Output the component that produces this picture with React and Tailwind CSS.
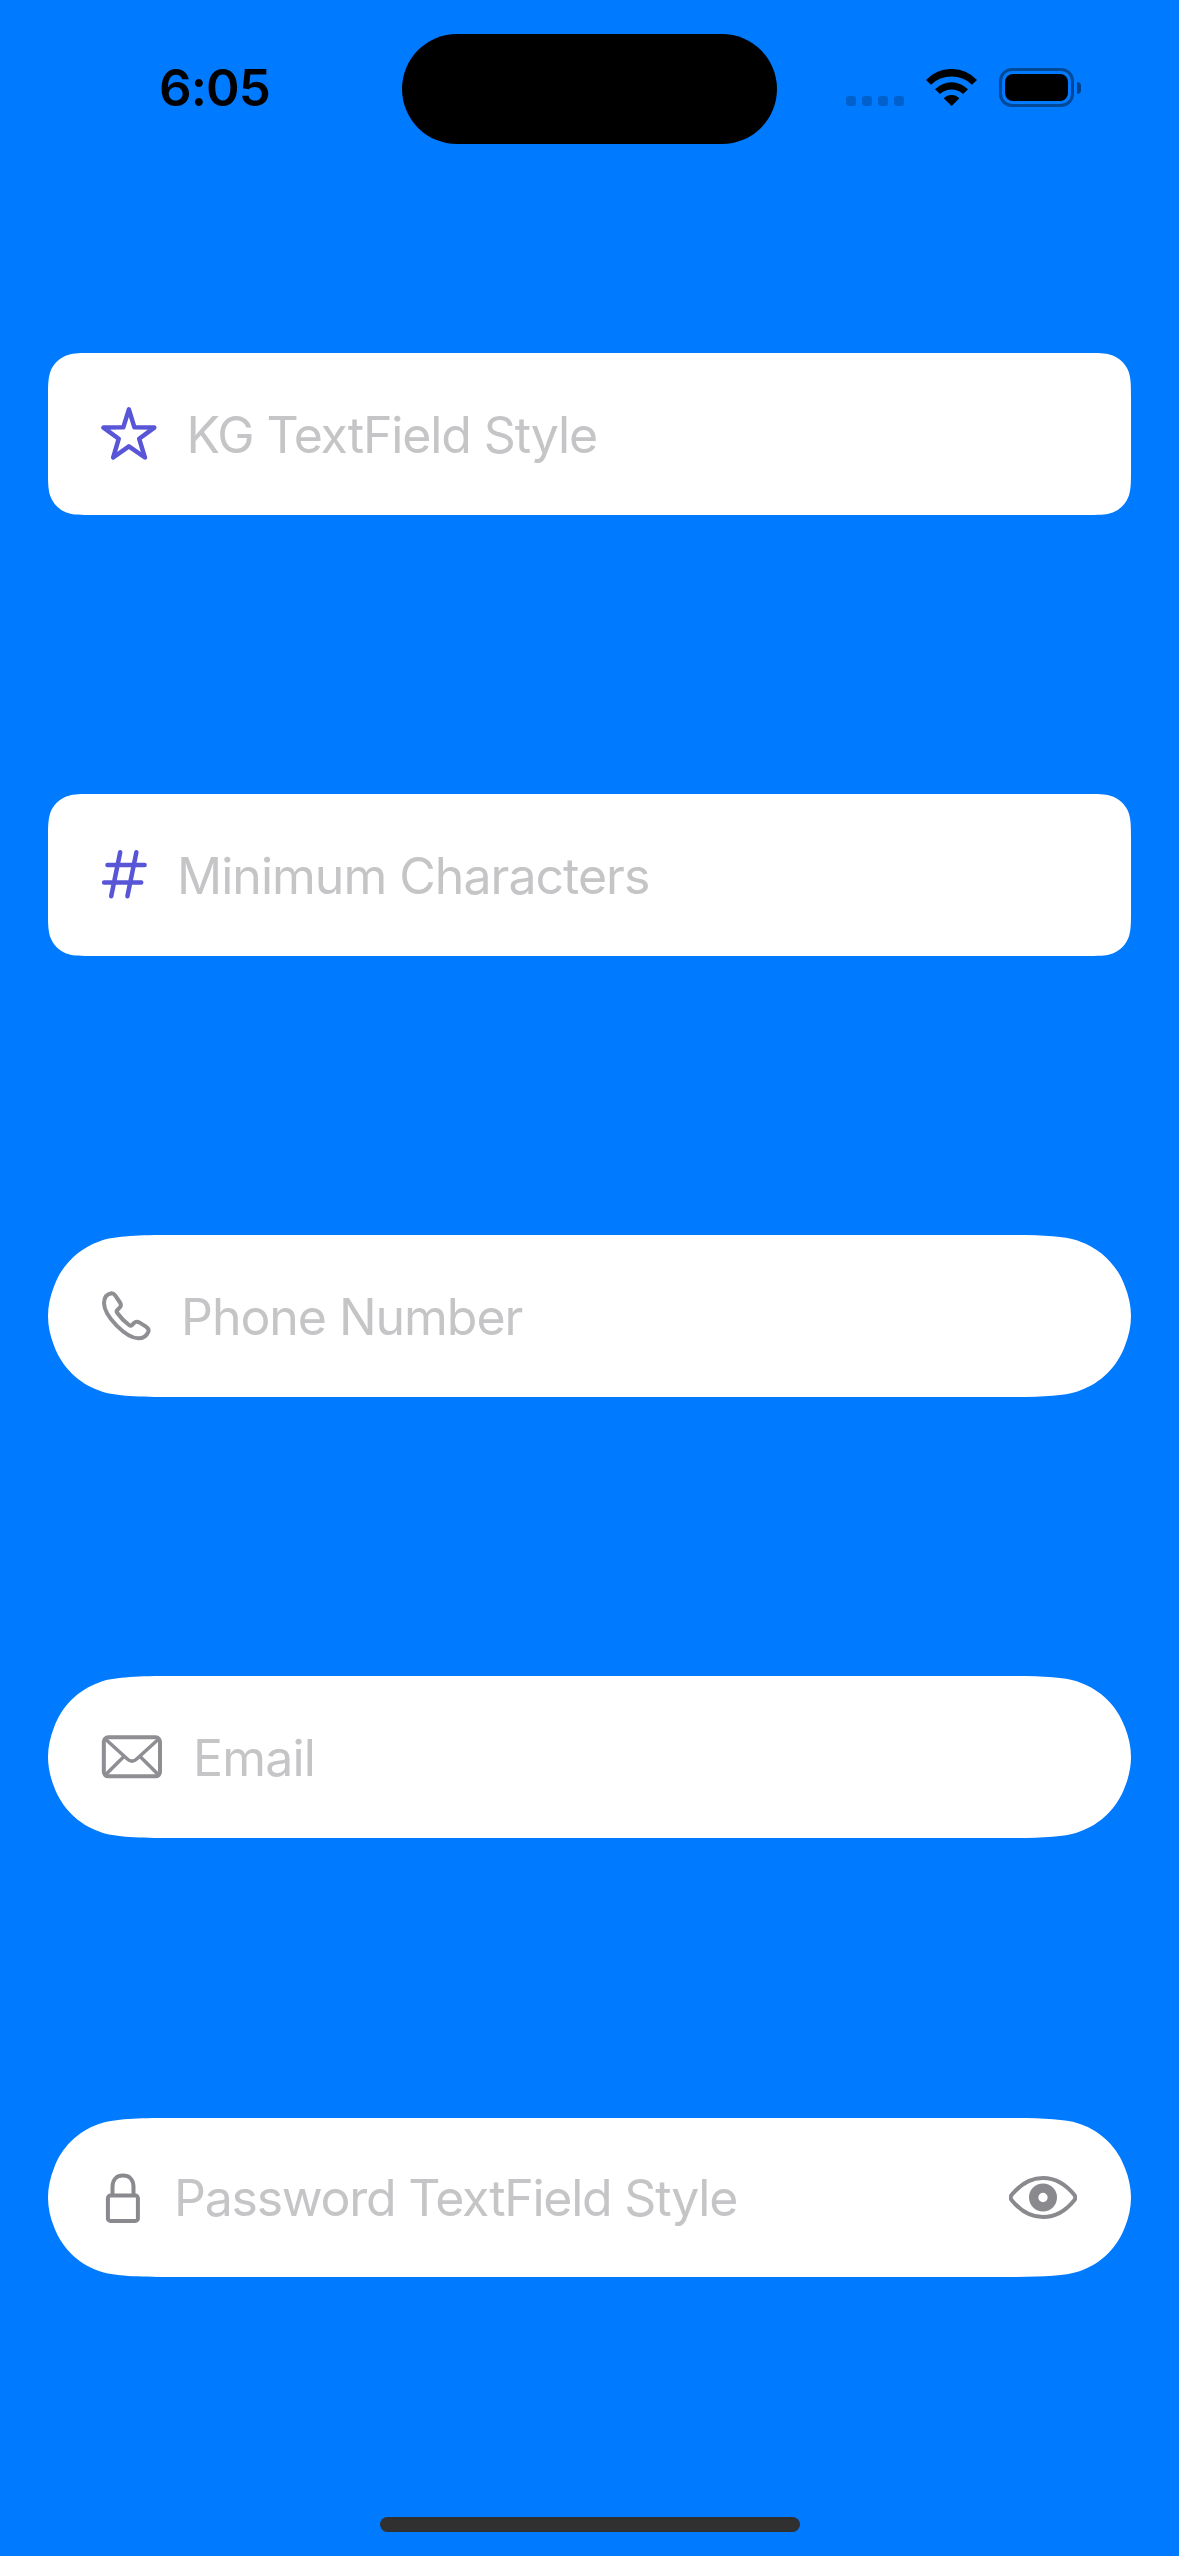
const RECT_CLIP =
  "[clip-path:url(#field-rect)]";
const CAPSULE_CLIP =
  "[clip-path:url(#field-capsule)]";

// Continuous-curvature outline with radius r; `capsule` closes the sides with a plain arc.
function outline(w, h, r, capsule) {
  const side = capsule
    ? [[0.028, 0.749], [0, 0.874], [0, 1]]
    : [[0, 0.868407], [0, 1.088493], [0, 1.528665]];
  const top = capsule
    ? [[1.528665, 0], [1.13, 0], [0.83, 0.013]]
    : [[1.528665, 0], [1.088493, 0], [0.868407, 0]];
  const seq = [
    ...top,
    [0.669934, 0.065496],
    [0.631494, 0.074911],
    [0.372824, 0.169059], [0.16906, 0.372824], [0.074911, 0.631494],
    ...side,
  ];
  if (capsule) seq[4] = [0.631494, 0.0788];
  const corner = (fx, fy, rev) => {
    const pts = seq.map(([x, y]) => `${fx ? w - x * r : x * r} ${fy ? h - y * r : y * r}`);
    const p = rev ? pts.reverse() : pts;
    return rev
      ? `L${p[0]}C${p[1]} ${p[2]} ${p[3]}C${p[4]} ${p[5]} ${p[6]}L${p[7]}C${p[8]} ${p[9]} ${p[10]}`
      : `L${p[0]}C${p[1]} ${p[2]} ${p[3]}L${p[4]}C${p[5]} ${p[6]} ${p[7]}C${p[8]} ${p[9]} ${p[10]}`;
  };
  return (
    `M${w / 2} 0` + corner(true, false, false) + corner(true, true, true) +
    corner(false, true, false) + corner(false, false, true) + "Z"
  );
}

function Star() {
  return (
    <svg className="h-[56px] w-[56px] shrink-0 text-[#5856d6]" viewBox="101 406 56 56" fill="none" stroke="currentColor" strokeWidth="4.5" strokeLinejoin="round">
      <path d="M128.9 409.300L134.4 427.3L154.3 427.6L139.2 438.8L144.9 457.5L128.9 446.4L113.2 457.5L118.7 438.8L103.500 427.6L123.3 427.3Z" />
    </svg>
  );
}

function Hash() {
  return (
    <svg className="h-[52px] w-[46px] shrink-0 text-[#5856d6]" viewBox="101 849 46 52" fill="none" stroke="currentColor" strokeWidth="4.5" strokeLinecap="round">
      <path d="M120.2 852.2L111.2 896.2M136.4 852.2L127.4 896.2M107.5 864.9H144.600M104.100 882.4H141.2" />
    </svg>
  );
}

function Phone() {
  return (
    <svg className="h-[50px] w-[50px] shrink-0 text-[#8e8e93]" viewBox="213 212 150 150" fill="none" stroke="currentColor" strokeWidth="12" strokeLinejoin="round">
      <path d="M245 219Q251 219 256 226L269 245Q276 255 269 262L262 269Q258 273 262 278Q276 298 297 314Q302 318 306 314L312 308Q319 301 329 307L348 319Q358 325 355 334Q347 354 325 354Q298 354 260 316Q222 277 222 248Q223 222 245 219Z" />
    </svg>
  );
}

function Envelope() {
  return (
    <svg className="h-[44px] w-[61px] shrink-0 text-[#8e8e93]" viewBox="213 224 183 132" fill="none" stroke="currentColor" strokeWidth="12">
      <rect x="221.5" y="231" width="168.500" height="117" rx="13" />
      <path strokeWidth="10.5" d="M226 236L292 296Q306 309 320 296L386 236M226 344L281 289M386 344L331 289" />
    </svg>
  );
}

function Lock() {
  return (
    <svg className="h-[50px] w-[44px] shrink-0 text-[#8a8a8e]" viewBox="101 2172 44 50" fill="none" stroke="currentColor" strokeWidth="4">
      <rect x="107.9" y="2194.600" width="30" height="25.300" rx="2.5" />
      <path d="M112.5 2195V2186C112.5 2178 117 2174.6 123 2174.6S133.5 2178 133.5 2186V2195" />
    </svg>
  );
}

function Eye() {
  return (
    <svg className="h-[43px] w-[68px] shrink-0 text-[#8a8a8e]" viewBox="147 228 204 129" fill="none" stroke="currentColor">
      <path strokeWidth="12" d="M154 286C173 262 206 234 249 234S325 262 344 286Q348 292.500 344 299C325 323 292 351 249 351S173 323 154 299Q150 292.500 154 286Z" />
      <circle cx="249" cy="292.500" r="28" strokeWidth="28" />
    </svg>
  );
}

function StatusBar() {
  return (
    <header className="flex h-[177px] items-start">
      <div className="w-[402px] pt-[58px] pl-[159px] text-[51px] leading-[60px] font-semibold text-black">
        <span className="tracking-[-0.9px]">6:05</span>
      </div>
      <div className="mt-[34px] h-[110px] w-[375px] rounded-full bg-black" />
      <div className="flex pt-[68px] pl-[69px]">
        <div className="flex gap-[6px] pt-[28px]">
          <i className="size-[10px] rounded-[3px] bg-black/20" />
          <i className="size-[10px] rounded-[3px] bg-black/20" />
          <i className="size-[10px] rounded-[3px] bg-black/20" />
          <i className="size-[10px] rounded-[3px] bg-black/20" />
        </div>
        <svg className="ml-[22px] mt-px h-[38px] w-[51px]" viewBox="558 147 153 114" fill="black">
          <path d="M558 180A105 105 0 0 1 711 180L696 194A89 89 0 0 0 573 194Z" />
          <path d="M585 208A69 69 0 0 1 684 208L669 222A50 50 0 0 0 600 222Z" />
          <path d="M611 235A32 32 0 0 1 658 235L635 258Z" />
        </svg>
        <div className="ml-[22px] flex items-center">
          <div className="h-[39px] w-[75px] rounded-[13px] border-3 border-black/40 p-[3px]">
            <div className="h-full rounded-[8px] bg-black" />
          </div>
          <div className="ml-[3px] h-[12px] w-[4px] rounded-r-full bg-black/45" />
        </div>
      </div>
    </header>
  );
}

const fields = [
  { icon: Star, label: "KG TextField Style", shape: RECT_CLIP, text: "ml-[29.5px] tracking-[-1.13px]" },
  { icon: Hash, label: "Minimum Characters", shape: RECT_CLIP, text: "ml-[30px] tracking-[-0.98px]" },
  { icon: Phone, label: "Phone Number", shape: CAPSULE_CLIP, text: "ml-[30px] tracking-[-1.05px]" },
  { icon: Envelope, label: "Email", shape: CAPSULE_CLIP, text: "ml-[31px] tracking-[-0.8px]" },
];

export default function App() {
  return (
    <div className="flex h-[2556px] w-[1179px] flex-col overflow-hidden bg-[#007aff] font-['Inter',sans-serif]">
      <svg className="absolute size-0" aria-hidden="true">
        <clipPath id="field-rect"><path d={outline(1083, 162, 30, false)} /></clipPath>
        <clipPath id="field-capsule"><path d={outline(1083, 162, 81, true)} /></clipPath>
        <clipPath id="field-password"><path d={outline(1083, 159, 79.5, true)} /></clipPath>
      </svg>
      <StatusBar />
      <main className="flex flex-1 flex-col gap-[279px] px-[48px] pt-[176px]">
        {fields.map(({ icon: Icon, label, shape, text }) => (
          <label key={label} className={`flex h-[162px] items-center bg-white px-[53px] ${shape}`}>
            <Icon />
            <span className={`pt-[2px] text-[50px] leading-[60px] font-[430] whitespace-nowrap text-[#c5c5c7] ${text}`}>{label}</span>
          </label>
        ))}
        <label className="mt-px flex h-[159px] items-center bg-white pr-[54px] pl-[53px] [clip-path:url(#field-password)]">
          <Lock />
          <span className="ml-[29px] flex-1 pt-px text-[50px] leading-[60px] font-[430] tracking-[-1.25px] whitespace-nowrap text-[#c5c5c7]">
            Password TextField Style
          </span>
          <Eye />
        </label>
      </main>
      <footer className="flex justify-center pb-[24px]">
        <div className="h-[15px] w-[420px] rounded-full bg-[#303030]" />
      </footer>
    </div>
  );
}
